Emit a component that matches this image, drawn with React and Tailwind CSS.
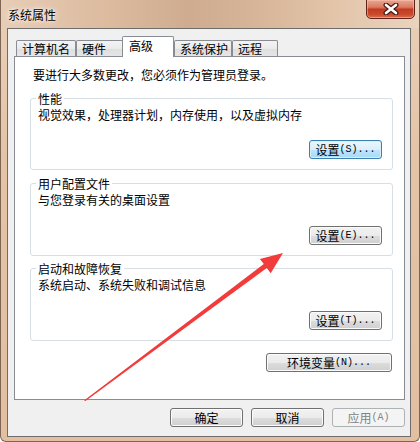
import React from "react";

const FONT = { fontFamily: '"Noto Sans CJK SC", "Noto Sans", sans-serif' };

function Btn({ zh, latin, w = "w-[73px]", variant = "normal" }) {
  const base =
    "h-[19px] flex items-center justify-center rounded-[3px] text-[12px] leading-none border";
  const styles = {
    normal:
      "border-[#707070] text-black bg-[linear-gradient(180deg,#f2f2f2_0%,#ebebeb_50%,#dddddd_51%,#cfcfcf_100%)] shadow-[inset_0_0_0_1px_#fbfbfb]",
    focus:
      "border-[#3c7fb1] text-black bg-[linear-gradient(180deg,#eaf6fd_0%,#d9f0fc_50%,#bee6fd_51%,#a7d9f5_100%)] shadow-[inset_0_0_0_1px_#d8eefb]",
    disabled: "border-[#adb2b5] text-[#838383] bg-[#f4f4f4]",
  };
  return (
    <div className={`${base} ${w} ${styles[variant]}`}>
      <span>{zh}</span>
      {latin && (
        <span
          className="text-[10px] tracking-[0px]"
          style={{ fontFamily: '"Liberation Mono", monospace' }}
        >
          {latin}
        </span>
      )}
    </div>
  );
}

function Group({ title, text, btn, h, className = "" }) {
  return (
    <div
      className={`relative border border-[#d5dfe5] rounded-[3px] ${h} flex flex-col justify-between pt-[8px] pb-[10px] pl-[7px] pr-[10px] ${className}`}
    >
      <div className="absolute left-[5px] -top-[8px] bg-white px-[2px] text-[12px] leading-[15px] text-black">
        {title}
      </div>
      <div className="text-[12px] leading-[16px] text-black">{text}</div>
      <div className="flex justify-end">{btn}</div>
    </div>
  );
}

function Tab({ label, w, selected }) {
  if (selected) {
    return (
      <div
        className={`relative z-10 -ml-[2px] ${w} h-[21px] -mb-[1px] bg-white border border-b-0 border-[#898c95] rounded-t-[2px] pl-[6px] pt-[1px] text-[12px] leading-[16px] text-black`}
      >
        {label}
      </div>
    );
  }
  return (
    <div
      className={`${w} h-[16px] border border-b-0 border-[#898c95] rounded-t-[2px] bg-[linear-gradient(180deg,#f3f3f3_0%,#ebebeb_50%,#dedede_51%,#e6e6e6_100%)] pl-[5px] text-[12px] leading-[15px] text-black`}
    >
      {label}
    </div>
  );
}

export default function App() {
  return (
    <div
      className="relative w-[420px] h-[442px] overflow-hidden rounded-b-[6px] border border-t-0 border-[#7d6553] bg-[linear-gradient(180deg,#e9cfb8_0%,#e4c3a6_40%,#e2bfa1_100%)]"
      style={FONT}
    >
      {/* title bar */}
      <div className="relative h-[28px] bg-[linear-gradient(90deg,#e7cdb6_0%,#dcbb9f_25%,#cfac8f_45%,#d6b497_60%,#e3c5aa_80%,#ead3bf_100%)]">
        <div className="absolute left-[7px] top-[7px] text-[12px] leading-[16px] text-black [text-shadow:0_0_6px_#ffffff,0_0_3px_#ffffff]">
          系统属性
        </div>
        <div className="absolute left-[365px] top-[-1px] w-[49px] h-[20px] rounded-b-[5px] border border-[#5e2418] bg-[linear-gradient(180deg,#e8a793_0%,#d97a62_40%,#c43a20_52%,#c94a2c_80%,#d9704f_100%)] shadow-[inset_0_0_0_1px_rgba(255,200,180,0.5)] flex items-center justify-center">
          <svg width="16" height="12" viewBox="0 0 16 12">
            <path d="M3 2 L13 10 M13 2 L3 10" stroke="#4a1a12" strokeWidth="5" strokeLinecap="round" />
            <path d="M3 2 L13 10 M13 2 L3 10" stroke="#ffffff" strokeWidth="2.6" strokeLinecap="round" />
          </svg>
        </div>
      </div>

      {/* client area */}
      <div className="ml-[6px] w-[404px] h-[409px] border border-[#6d6d6d] bg-[#f0f0f0] pt-[7px] pl-[6px] pr-[5px] flex flex-col">
        {/* tabs */}
        <div className="flex items-end h-[20px] pl-[2px]">
          <Tab label="计算机名" w="w-[60px]" />
          <Tab label="硬件" w="w-[48px]" />
          <Tab label="高级" w="w-[52px]" selected />
          <Tab label="系统保护" w="w-[58px]" />
          <Tab label="远程" w="w-[46px]" />
        </div>
        {/* panel */}
        <div className="h-[344px] bg-white border border-[#898c95] pt-[10px] pl-[15px] pr-[11px] flex flex-col">
          <div className="ml-[3px] text-[12px] leading-[16px] text-black">
            要进行大多数更改，您必须作为管理员登录。
          </div>
          <Group
            className="mt-[15px]"
            h="h-[72px]"
            title="性能"
            text="视觉效果，处理器计划，内存使用，以及虚拟内存"
            btn={<Btn zh="设置" latin="(S)..." variant="focus" />}
          />
          <Group
            className="mt-[13px]"
            h="h-[73px]"
            title="用户配置文件"
            text="与您登录有关的桌面设置"
            btn={<Btn zh="设置" latin="(E)..." />}
          />
          <Group
            className="mt-[12px]"
            h="h-[73px]"
            title="启动和故障恢复"
            text="系统启动、系统失败和调试信息"
            btn={<Btn zh="设置" latin="(T)..." />}
          />
          <div className="mt-[12px] flex justify-end pr-[1px]">
            <Btn zh="环境变量" latin="(N)..." w="w-[126px]" />
          </div>
        </div>
        {/* bottom buttons */}
        <div className="mt-[8px] flex justify-end gap-[8px]">
          <Btn zh="确定" />
          <Btn zh="取消" />
          <Btn zh="应用" latin="(A)" variant="disabled" />
        </div>
      </div>

      {/* red arrow annotation */}
      <svg
        className="absolute left-0 top-0 pointer-events-none"
        width="420"
        height="442"
        viewBox="0 0 420 442"
      >
        <polygon
          points="83,400.5 262.8,264.1 258.9,258.9 282,253 269.7,273.3 265.8,268.1 84.5,401"
          fill="#f23b3b"
        />
      </svg>
    </div>
  );
}
